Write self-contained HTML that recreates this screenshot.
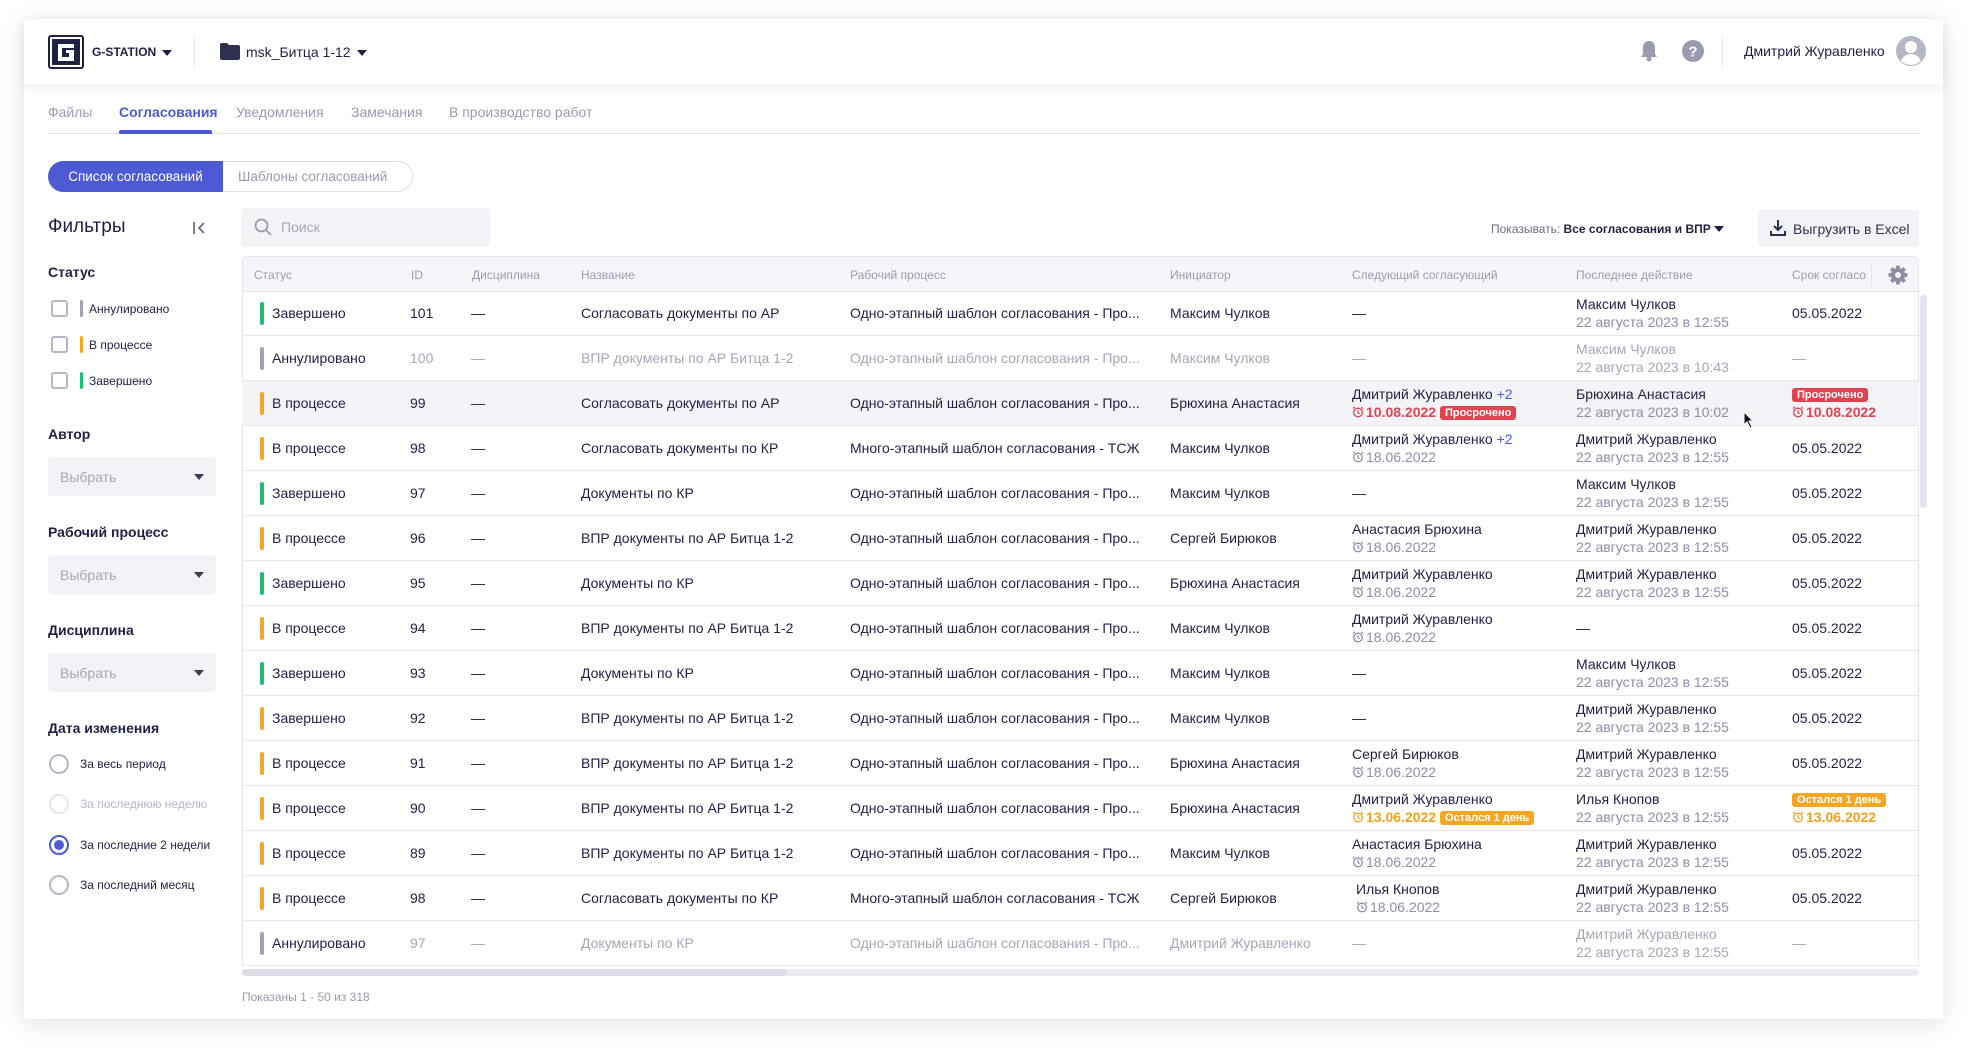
<!DOCTYPE html>
<html><head><meta charset="utf-8"><style>
*{box-sizing:border-box;margin:0;padding:0}
body{width:1968px;height:1048px;background:#fff;font-family:"Liberation Sans",sans-serif;color:#1f2044;position:relative;overflow:hidden}
.abs{position:absolute}
.card{position:absolute;left:24px;top:19px;width:1919px;height:1000px;background:#fff;box-shadow:0 4px 24px rgba(0,0,0,.12)}
.hdr{position:absolute;left:24px;top:19px;width:1919px;height:65px;background:#fff;box-shadow:0 4px 12px rgba(0,0,0,.07)}
.tab{position:absolute;top:104px;font-size:14px;color:#9a9bb0}
.lbl{position:absolute;left:48px;font-size:14px;font-weight:bold;color:#1f2044}
.cb{position:absolute;left:51px;width:17px;height:17px;border:2px solid #b5b6c6;border-radius:3px}
.cbar{position:absolute;left:80px;width:3px;height:17px;border-radius:2px}
.ct{position:absolute;left:89px;font-size:12px;color:#1f2044}
.sel{position:absolute;left:48px;width:168px;height:39px;background:#f3f3f7;border-radius:4px;font-size:14px;color:#a5a6b8;padding:12px 12px}
.sel:after{content:"";position:absolute;right:12px;top:17px;border:5px solid transparent;border-top:6px solid #3a3b55}
.rad{position:absolute;left:49px;width:20px;height:20px;border:2px solid #b5b6c6;border-radius:50%}
.rt{position:absolute;left:80px;font-size:12px;color:#1f2044}
.tbl{position:absolute;left:242px;top:256px;width:1677px;height:710px;border:1px solid #e3e4ec;border-radius:6px 6px 0 0;overflow:hidden}
.th{position:absolute;left:0;top:0;width:100%;height:35px;background:#f6f6fa;border-bottom:1px solid #e3e4ec}
.th span{position:absolute;top:11px;font-size:12px;color:#9a9bb0;white-space:nowrap}
.row{position:absolute;left:0;width:100%;height:45px;border-bottom:1px solid #e6e7ee;font-size:14px}
.row>div{position:absolute;white-space:nowrap}
.c1{top:14px}
.l1{top:5px}.l2{top:23px}
.bar{position:absolute;left:18px;top:11px;width:4px;height:23px;border-radius:2px}
.m{color:#a5a6b8}
.g{color:#8d8ea6}
.bd{display:inline-block;color:#fff;font-size:11px;font-weight:bold;padding:1px 5px;border-radius:3px;vertical-align:1px}
.red{color:#e0454f}.org{color:#f0a11a}
.blue{color:#4c5bd4}
.ic{width:12px;height:12px;vertical-align:-1px;margin-right:2px}
</style></head><body>
<svg width="0" height="0" style="position:absolute"><defs><symbol id="clk" viewBox="0 0 12 12"><circle cx="6" cy="6.5" r="4.3" fill="none" stroke="currentColor" stroke-width="1.3"/><path d="M6 4V6.8L7.6 7.8M1 2.6L2.8 1M11 2.6L9.2 1" fill="none" stroke="currentColor" stroke-width="1.2"/></symbol></defs></svg>
<div class="card"></div>
<div class="hdr"></div>
<div class="abs" style="left:48px;top:35px;width:36px;height:34px;border:2px solid #1f2044;border-radius:3px;background:#fff">
<svg width="32" height="30" viewBox="0 0 32 30"><rect x="2" y="2" width="28" height="26" fill="#1f2044"/><path d="M8 7H24V11H12V20H19V16H16V13H24V24H8Z" fill="#fff"/></svg></div>
<div class="abs" style="left:92px;top:45px;font-size:12px;font-weight:bold">G-STATION</div>
<div class="abs" style="left:162px;top:50px;border:5px solid transparent;border-top:6px solid #1f2044"></div>
<div class="abs" style="left:194px;top:36px;width:1px;height:32px;background:#e3e4ec"></div>
<svg class="abs" style="left:220px;top:43px" width="20" height="17" viewBox="0 0 20 17"><path d="M0 2Q0 0 2 0H7L9 2H18Q20 2 20 4V15Q20 17 18 17H2Q0 17 0 15Z" fill="#2f3050"/></svg>
<div class="abs" style="left:246px;top:44px;font-size:14px">msk_Битца 1-12</div>
<div class="abs" style="left:357px;top:50px;border:5px solid transparent;border-top:6px solid #1f2044"></div>
<svg class="abs" style="left:1640px;top:40px" width="18" height="22" viewBox="0 0 18 22"><path d="M9 1C5 1 3 4 3 8V14L1 17H17L15 14V8C15 4 13 1 9 1Z" fill="#9a9bb0"/><circle cx="9" cy="19" r="2.5" fill="#9a9bb0"/></svg>
<svg class="abs" style="left:1682px;top:40px" width="22" height="22" viewBox="0 0 22 22"><circle cx="11" cy="11" r="11" fill="#9a9bb0"/><text x="11" y="16.5" font-size="15" font-weight="bold" text-anchor="middle" fill="#fff" font-family="Liberation Sans">?</text></svg>
<div class="abs" style="left:1722px;top:36px;width:1px;height:32px;background:#e3e4ec"></div>
<div class="abs" style="left:1744px;top:43px;font-size:14px">Дмитрий Журавленко</div>
<svg class="abs" style="left:1896px;top:36px" width="30" height="30" viewBox="0 0 30 30"><circle cx="15" cy="15" r="15" fill="#b5b6c6"/><circle cx="15" cy="11" r="6" fill="#fff"/><path d="M5 25Q8 18 15 18Q22 18 25 25Q20 29 15 29Q10 29 5 25Z" fill="#fff"/></svg>
<div class="tab" style="left:48px">Файлы</div>
<div class="tab" style="left:119px;color:#4c5bd4;font-weight:bold">Согласования</div>
<div class="tab" style="left:236px">Уведомления</div>
<div class="tab" style="left:351px">Замечания</div>
<div class="tab" style="left:449px">В производство работ</div>
<div class="abs" style="left:48px;top:133px;width:1872px;height:1px;background:#e3e4ec"></div>
<div class="abs" style="left:119px;top:130px;width:93px;height:4px;background:#4c5bd4;border-radius:2px 2px 0 0"></div>
<div class="abs" style="left:48px;top:161px;width:365px;height:31px;border:1px solid #dcdde6;border-radius:16px"></div>
<div class="abs" style="left:48px;top:161px;width:175px;height:31px;background:#4c5bd4;border-radius:16px 0 0 16px;color:#fff;font-size:13.5px;padding-top:8px;text-align:center">Список согласований</div>
<div class="abs" style="left:238px;top:169px;font-size:13.5px;color:#9a9bb0">Шаблоны согласований</div>
<div class="abs" style="left:48px;top:216px;font-size:19px">Фильтры</div>
<svg class="abs" style="left:192px;top:221px" width="14" height="14" viewBox="0 0 14 14"><path d="M2 1V13M12 2L7 7L12 12" fill="none" stroke="#6b6c85" stroke-width="1.8"/></svg>
<div class="lbl" style="top:264px">Статус</div>
<div class="cb" style="top:300px"></div><div class="cbar" style="top:300px;background:#a0a2b8"></div><div class="ct" style="top:302px">Аннулировано</div>
<div class="cb" style="top:336px"></div><div class="cbar" style="top:336px;background:#f5a623"></div><div class="ct" style="top:338px">В процессе</div>
<div class="cb" style="top:372px"></div><div class="cbar" style="top:372px;background:#1bbf72"></div><div class="ct" style="top:374px">Завершено</div>
<div class="lbl" style="top:426px">Автор</div>
<div class="sel" style="top:457px">Выбрать</div>
<div class="lbl" style="top:524px">Рабочий процесс</div>
<div class="sel" style="top:555px">Выбрать</div>
<div class="lbl" style="top:622px">Дисциплина</div>
<div class="sel" style="top:653px">Выбрать</div>
<div class="lbl" style="top:720px">Дата изменения</div>
<div class="rad" style="top:754px"></div><div class="rt" style="top:757px">За весь период</div>
<div class="rad" style="top:794px;border-color:#e6e7ee"></div><div class="rt" style="top:797px;color:#b5b6c6">За последнюю неделю</div>
<div class="rad" style="top:835px;border-color:#4c5bd4"><div style="position:absolute;left:3px;top:3px;width:10px;height:10px;border-radius:50%;background:#4c5bd4"></div></div><div class="rt" style="top:838px">За последние 2 недели</div>
<div class="rad" style="top:875px"></div><div class="rt" style="top:878px">За последний месяц</div>
<div class="abs" style="left:241px;top:208px;width:249px;height:39px;background:#f3f3f7;border-radius:4px"></div>
<svg class="abs" style="left:254px;top:218px" width="18" height="18" viewBox="0 0 18 18"><circle cx="7.5" cy="7.5" r="6" fill="none" stroke="#9a9bb0" stroke-width="1.8"/><path d="M12 12L17 17" stroke="#9a9bb0" stroke-width="1.8"/></svg>
<div class="abs" style="left:281px;top:219px;font-size:14px;color:#a5a6b8">Поиск</div>
<div class="abs" style="left:1491px;top:222px;font-size:12px;color:#6b6c85">Показывать: <b style="color:#1f2044">Все согласования и ВПР</b></div>
<div class="abs" style="left:1714px;top:226px;border:5px solid transparent;border-top:6px solid #1f2044"></div>
<div class="abs" style="left:1758px;top:210px;width:161px;height:37px;background:#f3f3f7;border-radius:4px"></div>
<svg class="abs" style="left:1770px;top:219px" width="16" height="18" viewBox="0 0 16 18"><path d="M8 1V11M4 7L8 11L12 7M1 12V16H15V12" fill="none" stroke="#2f3050" stroke-width="2"/></svg>
<div class="abs" style="left:1793px;top:221px;font-size:14px;color:#2f3050">Выгрузить в Excel</div>
<div class="tbl">
<div class="th"><span style="left:11px">Статус</span><span style="left:168px">ID</span><span style="left:229px">Дисциплина</span><span style="left:338px">Название</span><span style="left:607px">Рабочий процесс</span><span style="left:927px">Инициатор</span><span style="left:1109px">Следующий согласующий</span><span style="left:1333px">Последнее действие</span><span style="left:1549px">Срок согласо</span>
<div style="position:absolute;left:1628px;top:6px;width:1px;height:23px;background:#e3e4ec"></div>
<svg style="position:absolute;left:1645px;top:8px" width="20" height="20" viewBox="0 0 20 20"><g fill="#8d8ea6"><rect x="8" y="0.5" width="4" height="19" rx="1"/><rect x="8" y="0.5" width="4" height="19" rx="1" transform="rotate(45 10 10)"/><rect x="8" y="0.5" width="4" height="19" rx="1" transform="rotate(90 10 10)"/><rect x="8" y="0.5" width="4" height="19" rx="1" transform="rotate(135 10 10)"/><circle cx="10" cy="10" r="7"/></g><circle cx="10" cy="10" r="3" fill="#f6f6fa"/></svg></div>
</div>
<div class="abs" style="left:242px;top:969px;width:1677px;height:7px;background:#ebebf1;border-radius:4px"></div>
<div class="abs" style="left:242px;top:969px;width:545px;height:7px;background:#dcdde6;border-radius:4px"></div>
<div class="abs" style="left:1920px;top:295px;width:7px;height:213px;background:#e3e4ec;border-radius:4px"></div>
<div class="abs" style="left:242px;top:990px;font-size:12px;color:#9a9bb0">Показаны 1 - 50 из 318</div>

<div class="tbl" style="border:none;background:transparent;overflow:visible">
<div class="row" style="top:35px"><div class="bar" style="background:#1bbf72"></div><div class="c1" style="left:30px">Завершено</div><div class="c1" style="left:168px">101</div><div class="c1" style="left:229px">—</div><div class="c1" style="left:339px">Согласовать документы по АР</div><div class="c1" style="left:608px">Одно-этапный шаблон согласования - Про...</div><div class="c1" style="left:928px">Максим Чулков</div><div class="c1" style="left:1110px">—</div><div class="l1" style="left:1334px">Максим Чулков</div><div class="l2 g" style="left:1334px">22 августа 2023 в 12:55</div><div class="c1" style="left:1550px">05.05.2022</div></div>

<div class="row" style="top:80px"><div class="bar" style="background:#a0a2b8"></div><div class="c1" style="left:30px">Аннулировано</div><div class="c1 m" style="left:168px">100</div><div class="c1 m" style="left:229px">—</div><div class="c1 m" style="left:339px">ВПР документы по АР Битца 1-2</div><div class="c1 m" style="left:608px">Одно-этапный шаблон согласования - Про...</div><div class="c1 m" style="left:928px">Максим Чулков</div><div class="c1 m" style="left:1110px">—</div><div class="l1 m" style="left:1334px">Максим Чулков</div><div class="l2 m" style="left:1334px">22 августа 2023 в 10:43</div><div class="c1 m" style="left:1550px">—</div></div>

<div class="row" style="top:125px;background:#f3f3f8"><div class="bar" style="background:#f5a623"></div><div class="c1" style="left:30px">В процессе</div><div class="c1" style="left:168px">99</div><div class="c1" style="left:229px">—</div><div class="c1" style="left:339px">Согласовать документы по АР</div><div class="c1" style="left:608px">Одно-этапный шаблон согласования - Про...</div><div class="c1" style="left:928px">Брюхина Анастасия</div><div class="l1" style="left:1110px">Дмитрий Журавленко <span class="blue">+2</span></div><div class="l2 red" style="left:1110px;font-weight:bold"><svg class="ic"><use href="#clk"/></svg>10.08.2022 <span class="bd" style="background:#e0454f">Просрочено</span></div><div class="l1" style="left:1334px">Брюхина Анастасия</div><div class="l2 g" style="left:1334px">22 августа 2023 в 10:02</div><div class="l1" style="left:1550px"><span class="bd" style="background:#e0454f">Просрочено</span></div><div class="l2 red" style="left:1550px;font-weight:bold"><svg class="ic"><use href="#clk"/></svg>10.08.2022</div>
<svg style="position:absolute;left:1501px;top:30px" width="12" height="18" viewBox="0 0 12 18"><path d="M1 1V14L4 11L7 17L9 16L6 10H10Z" fill="#111" stroke="#fff" stroke-width="1"/></svg></div>

<div class="row" style="top:170px"><div class="bar" style="background:#f5a623"></div><div class="c1" style="left:30px">В процессе</div><div class="c1" style="left:168px">98</div><div class="c1" style="left:229px">—</div><div class="c1" style="left:339px">Согласовать документы по КР</div><div class="c1" style="left:608px">Много-этапный шаблон согласования - ТСЖ</div><div class="c1" style="left:928px">Максим Чулков</div><div class="l1" style="left:1110px">Дмитрий Журавленко <span class="blue">+2</span></div><div class="l2 g" style="left:1110px"><svg class="ic"><use href="#clk"/></svg>18.06.2022</div><div class="l1" style="left:1334px">Дмитрий Журавленко</div><div class="l2 g" style="left:1334px">22 августа 2023 в 12:55</div><div class="c1" style="left:1550px">05.05.2022</div></div>

<div class="row" style="top:215px"><div class="bar" style="background:#1bbf72"></div><div class="c1" style="left:30px">Завершено</div><div class="c1" style="left:168px">97</div><div class="c1" style="left:229px">—</div><div class="c1" style="left:339px">Документы по КР</div><div class="c1" style="left:608px">Одно-этапный шаблон согласования - Про...</div><div class="c1" style="left:928px">Максим Чулков</div><div class="c1" style="left:1110px">—</div><div class="l1" style="left:1334px">Максим Чулков</div><div class="l2 g" style="left:1334px">22 августа 2023 в 12:55</div><div class="c1" style="left:1550px">05.05.2022</div></div>

<div class="row" style="top:260px"><div class="bar" style="background:#f5a623"></div><div class="c1" style="left:30px">В процессе</div><div class="c1" style="left:168px">96</div><div class="c1" style="left:229px">—</div><div class="c1" style="left:339px">ВПР документы по АР Битца 1-2</div><div class="c1" style="left:608px">Одно-этапный шаблон согласования - Про...</div><div class="c1" style="left:928px">Сергей Бирюков</div><div class="l1" style="left:1110px">Анастасия Брюхина</div><div class="l2 g" style="left:1110px"><svg class="ic"><use href="#clk"/></svg>18.06.2022</div><div class="l1" style="left:1334px">Дмитрий Журавленко</div><div class="l2 g" style="left:1334px">22 августа 2023 в 12:55</div><div class="c1" style="left:1550px">05.05.2022</div></div>

<div class="row" style="top:305px"><div class="bar" style="background:#1bbf72"></div><div class="c1" style="left:30px">Завершено</div><div class="c1" style="left:168px">95</div><div class="c1" style="left:229px">—</div><div class="c1" style="left:339px">Документы по КР</div><div class="c1" style="left:608px">Одно-этапный шаблон согласования - Про...</div><div class="c1" style="left:928px">Брюхина Анастасия</div><div class="l1" style="left:1110px">Дмитрий Журавленко</div><div class="l2 g" style="left:1110px"><svg class="ic"><use href="#clk"/></svg>18.06.2022</div><div class="l1" style="left:1334px">Дмитрий Журавленко</div><div class="l2 g" style="left:1334px">22 августа 2023 в 12:55</div><div class="c1" style="left:1550px">05.05.2022</div></div>

<div class="row" style="top:350px"><div class="bar" style="background:#f5a623"></div><div class="c1" style="left:30px">В процессе</div><div class="c1" style="left:168px">94</div><div class="c1" style="left:229px">—</div><div class="c1" style="left:339px">ВПР документы по АР Битца 1-2</div><div class="c1" style="left:608px">Одно-этапный шаблон согласования - Про...</div><div class="c1" style="left:928px">Максим Чулков</div><div class="l1" style="left:1110px">Дмитрий Журавленко</div><div class="l2 g" style="left:1110px"><svg class="ic"><use href="#clk"/></svg>18.06.2022</div><div class="c1" style="left:1334px">—</div><div class="c1" style="left:1550px">05.05.2022</div></div>

<div class="row" style="top:395px"><div class="bar" style="background:#1bbf72"></div><div class="c1" style="left:30px">Завершено</div><div class="c1" style="left:168px">93</div><div class="c1" style="left:229px">—</div><div class="c1" style="left:339px">Документы по КР</div><div class="c1" style="left:608px">Одно-этапный шаблон согласования - Про...</div><div class="c1" style="left:928px">Максим Чулков</div><div class="c1" style="left:1110px">—</div><div class="l1" style="left:1334px">Максим Чулков</div><div class="l2 g" style="left:1334px">22 августа 2023 в 12:55</div><div class="c1" style="left:1550px">05.05.2022</div></div>

<div class="row" style="top:440px"><div class="bar" style="background:#f5a623"></div><div class="c1" style="left:30px">Завершено</div><div class="c1" style="left:168px">92</div><div class="c1" style="left:229px">—</div><div class="c1" style="left:339px">ВПР документы по АР Битца 1-2</div><div class="c1" style="left:608px">Одно-этапный шаблон согласования - Про...</div><div class="c1" style="left:928px">Максим Чулков</div><div class="c1" style="left:1110px">—</div><div class="l1" style="left:1334px">Дмитрий Журавленко</div><div class="l2 g" style="left:1334px">22 августа 2023 в 12:55</div><div class="c1" style="left:1550px">05.05.2022</div></div>

<div class="row" style="top:485px"><div class="bar" style="background:#f5a623"></div><div class="c1" style="left:30px">В процессе</div><div class="c1" style="left:168px">91</div><div class="c1" style="left:229px">—</div><div class="c1" style="left:339px">ВПР документы по АР Битца 1-2</div><div class="c1" style="left:608px">Одно-этапный шаблон согласования - Про...</div><div class="c1" style="left:928px">Брюхина Анастасия</div><div class="l1" style="left:1110px">Сергей Бирюков</div><div class="l2 g" style="left:1110px"><svg class="ic"><use href="#clk"/></svg>18.06.2022</div><div class="l1" style="left:1334px">Дмитрий Журавленко</div><div class="l2 g" style="left:1334px">22 августа 2023 в 12:55</div><div class="c1" style="left:1550px">05.05.2022</div></div>

<div class="row" style="top:530px"><div class="bar" style="background:#f5a623"></div><div class="c1" style="left:30px">В процессе</div><div class="c1" style="left:168px">90</div><div class="c1" style="left:229px">—</div><div class="c1" style="left:339px">ВПР документы по АР Битца 1-2</div><div class="c1" style="left:608px">Одно-этапный шаблон согласования - Про...</div><div class="c1" style="left:928px">Брюхина Анастасия</div><div class="l1" style="left:1110px">Дмитрий Журавленко</div><div class="l2 org" style="left:1110px;font-weight:bold"><svg class="ic"><use href="#clk"/></svg>13.06.2022 <span class="bd" style="background:#f5a623">Остался 1 день</span></div><div class="l1" style="left:1334px">Илья Кнопов</div><div class="l2 g" style="left:1334px">22 августа 2023 в 12:55</div><div class="l1" style="left:1550px"><span class="bd" style="background:#f5a623">Остался 1 день</span></div><div class="l2 org" style="left:1550px;font-weight:bold"><svg class="ic"><use href="#clk"/></svg>13.06.2022</div></div>

<div class="row" style="top:575px"><div class="bar" style="background:#f5a623"></div><div class="c1" style="left:30px">В процессе</div><div class="c1" style="left:168px">89</div><div class="c1" style="left:229px">—</div><div class="c1" style="left:339px">ВПР документы по АР Битца 1-2</div><div class="c1" style="left:608px">Одно-этапный шаблон согласования - Про...</div><div class="c1" style="left:928px">Максим Чулков</div><div class="l1" style="left:1110px">Анастасия Брюхина</div><div class="l2 g" style="left:1110px"><svg class="ic"><use href="#clk"/></svg>18.06.2022</div><div class="l1" style="left:1334px">Дмитрий Журавленко</div><div class="l2 g" style="left:1334px">22 августа 2023 в 12:55</div><div class="c1" style="left:1550px">05.05.2022</div></div>

<div class="row" style="top:620px"><div class="bar" style="background:#f5a623"></div><div class="c1" style="left:30px">В процессе</div><div class="c1" style="left:168px">98</div><div class="c1" style="left:229px">—</div><div class="c1" style="left:339px">Согласовать документы по КР</div><div class="c1" style="left:608px">Много-этапный шаблон согласования - ТСЖ</div><div class="c1" style="left:928px">Сергей Бирюков</div><div class="l1" style="left:1114px">Илья Кнопов</div><div class="l2 g" style="left:1114px"><svg class="ic"><use href="#clk"/></svg>18.06.2022</div><div class="l1" style="left:1334px">Дмитрий Журавленко</div><div class="l2 g" style="left:1334px">22 августа 2023 в 12:55</div><div class="c1" style="left:1550px">05.05.2022</div></div>

<div class="row" style="top:665px"><div class="bar" style="background:#a0a2b8"></div><div class="c1" style="left:30px">Аннулировано</div><div class="c1 m" style="left:168px">97</div><div class="c1 m" style="left:229px">—</div><div class="c1 m" style="left:339px">Документы по КР</div><div class="c1 m" style="left:608px">Одно-этапный шаблон согласования - Про...</div><div class="c1 m" style="left:928px">Дмитрий Журавленко</div><div class="c1 m" style="left:1110px">—</div><div class="l1 m" style="left:1334px">Дмитрий Журавленко</div><div class="l2 m" style="left:1334px">22 августа 2023 в 12:55</div><div class="c1 m" style="left:1550px">—</div></div>
</div>
</body></html>
